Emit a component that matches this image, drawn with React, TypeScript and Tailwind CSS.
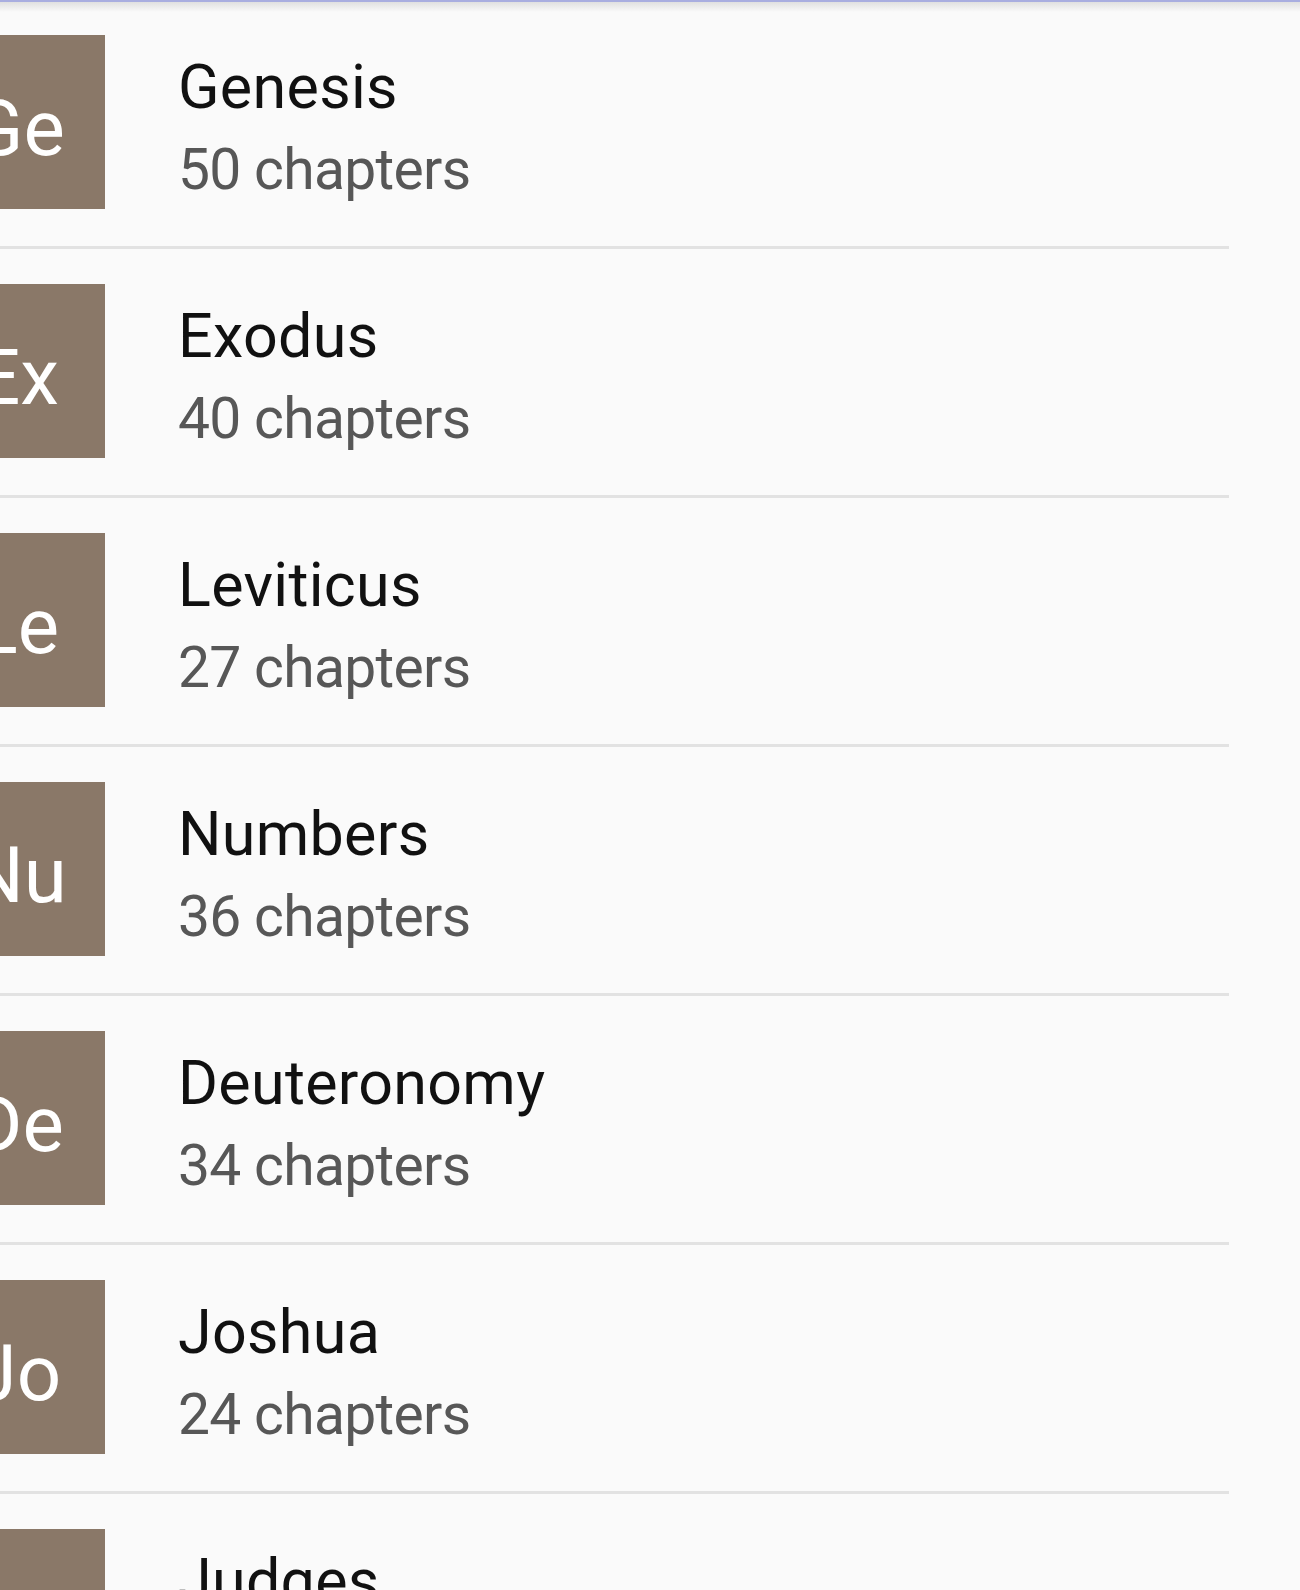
import React from 'react';

interface Book {
  abbr: string;
  name: string;
  chapters: number;
}

const books: Book[] = [
  { abbr: 'Ge', name: 'Genesis', chapters: 50 },
  { abbr: 'Ex', name: 'Exodus', chapters: 40 },
  { abbr: 'Le', name: 'Leviticus', chapters: 27 },
  { abbr: 'Nu', name: 'Numbers', chapters: 36 },
  { abbr: 'De', name: 'Deuteronomy', chapters: 34 },
  { abbr: 'Jo', name: 'Joshua', chapters: 24 },
  { abbr: 'Ju', name: 'Judges', chapters: 21 },
];

const BookRow: React.FC<{ book: Book }> = ({ book }) => (
  <div className="pr-[71px]">
    <div className="flex items-start pt-[35px] pb-[37px] border-b-[3px] border-[#e2e2e2]">
      {/* abbreviation tile, pushed past the left edge */}
      <div className="-ml-[70px] w-[175px] h-[174px] shrink-0 bg-[#8a7868] flex items-center justify-center">
        <span className="text-white text-[78px] leading-none mt-[14px]">{book.abbr}</span>
      </div>
      <div className="ml-[73px] mt-[17px] flex flex-col">
        <span className="text-[61px] leading-[70px] tracking-[0.3px] text-[#111]">{book.name}</span>
        <span className="mt-[13px] text-[57px] leading-[70px] tracking-[-0.7px] text-[#575757]">
          {book.chapters} chapters
        </span>
      </div>
    </div>
  </div>
);

export default function App() {
  return (
    <div
      className="w-[1300px] h-[1590px] overflow-hidden bg-[#fafafa] flex flex-col"
      style={{ fontFamily: 'Roboto, "Noto Sans", sans-serif' }}
    >
      {/* toolbar edge + shadow */}
      <div className="h-[2px] shrink-0 bg-[#a9aee0]" />
      <div className="h-[10px] shrink-0 bg-gradient-to-b from-[#e0e0e0] to-[#fafafa] -mb-[12px] relative" />
      <div className="flex flex-col overflow-hidden">
        {books.map((b) => (
          <BookRow key={b.abbr} book={b} />
        ))}
      </div>
    </div>
  );
}
